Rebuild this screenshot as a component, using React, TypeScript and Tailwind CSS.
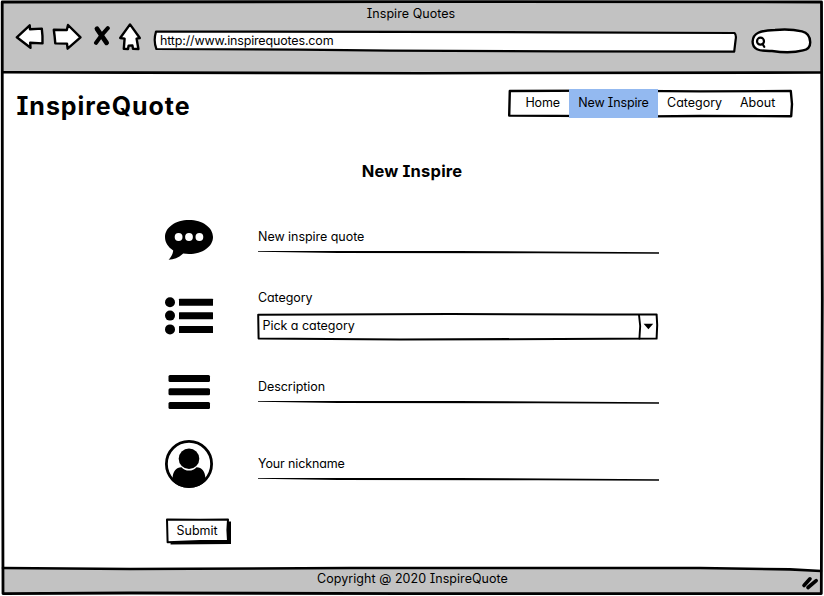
import type { ReactNode } from "react";

function Sketch({ box, className, children }: { box: string; className: string; children: ReactNode }) {
  return (
    <svg viewBox={box} className={className} fill="none" stroke="#000" strokeWidth="2.4" strokeLinejoin="round" strokeLinecap="round">
      {children}
    </svg>
  );
}

function WindowFrame() {
  return (
    <Sketch box="0 0 824 596" className="pointer-events-none absolute inset-0 h-[596px] w-[824px]">
      <path d="M2.2 2 L410 1.6 L821.5 2 L822.3 300 L821.3 593.6 L410 593.6 L130 593 L3 593.6 L2.4 300 Z" strokeWidth="2.8" />
      <path d="M3 72.2 L140 72.6 L420 73.2 L821 72.5" strokeWidth="2.6" />
      <path d="M3 568 L130 569 L350 568 L700 568 L790 569.4 L821 571" strokeWidth="2.6" />
    </Sketch>
  );
}

function Toolbar() {
  return (
    <div className="flex h-[34px] items-center pl-[14px]">
      <Sketch box="14 22 31 34" className="mr-[6px] h-[34px] w-[31px] shrink-0">
        <path d="M16.8 37.3 L29.7 25.3 L30 29.3 L41.8 28.6 Q42.8 36 42.5 43.4 L30.2 42.8 L30.5 47.8 Z" fill="#fff" />
      </Sketch>
      <Sketch box="51 22 32 34" className="mr-[10px] h-[34px] w-[32px] shrink-0">
        <path d="M53.8 29.8 L66.8 30 L68 25 L80.5 37.4 L67.6 48.7 L67 43.6 L55.3 43.4 L54.6 36 Z" fill="#fff" />
      </Sketch>
      <Sketch box="93 22 17 34" className="mr-[7px] h-[34px] w-[17px] shrink-0">
        <path d="M97 28.8 L106.6 42.8" strokeWidth="4.8" />
        <path d="M107.8 28.2 Q100.500 36 96 42.8" strokeWidth="4" />
      </Sketch>
      <Sketch box="117 22 26 34" className="mr-[9px] h-[34px] w-[26px] shrink-0">
        <path d="M130 24.4 L139.8 38 L136.6 38.6 L138.4 49 L133 48.8 L132.4 45.4 L128.6 45.6 L128 49 L123.8 48.8 L124.6 38.6 L120.2 38 Z" fill="#fff" />
      </Sketch>
      <div className="relative flex h-[34px] w-[586px] shrink-0 items-center">
        <Sketch box="152 22 586 34" className="absolute inset-0 h-[34px] w-[586px]">
          <path d="M156 31.6 L400 31.8 L560 32.4 L734.5 33 Q736.6 35 735.6 40 L734.2 51.6 L560 51.4 L390 50.6 L300 49.6 L156.4 49 Q153.2 41 156 31.6 Z" fill="#fff" strokeWidth="2.2" />
        </Sketch>
        <span className="relative ml-[8px] mt-[3px] text-[12.5px] leading-4 tracking-[-0.16px]">http://www.inspirequotes.com</span>
      </div>
      <Sketch box="750 22 63 34" className="ml-3 h-[34px] w-[63px] shrink-0">
        <path d="M752.6 41.5 C753 33 760 30.4 775 30 C786 29 796 30 802 31.4 C808 32.8 810 37 810.2 42 C810.4 47 808 49.5 803 50.4 C793 53 783 52.6 772 51 C758 51.4 752.6 49 752.6 41.5 Z" fill="#fff" />
        <circle cx="760.5" cy="41.2" r="3.5" strokeWidth="2.2" />
        <path d="M762.6 44 L764.2 46.8" strokeWidth="2.2" />
      </Sketch>
    </div>
  );
}

function Nav() {
  return (
    <nav className="relative mr-[30px] flex h-[30px] w-[286px] items-center text-[12.5px] leading-4">
      <Sketch box="508 88 286 30" className="absolute inset-0 h-[30px] w-[286px]">
        <path d="M509.8 91 L600 90.6 L700 91.4 L790.8 91 L792 104 L791.2 116.2 L700 116 L650 116.4 L509.2 115.6 Z" strokeWidth="2.4" />
      </Sketch>
      <a className="relative w-[61px] pl-[17.5px] tracking-[-0.2px]">Home</a>
      <a className="relative flex h-[29px] w-[89px] items-center justify-center bg-[#93b9f0] pb-px tracking-[-0.15px]">New Inspire</a>
      <a className="relative w-[73px] pl-[9px]">Category</a>
      <a className="relative pl-[9px]">About</a>
    </nav>
  );
}

function LineField({ label, className }: { label: string; className: string }) {
  return (
    <div className="flex w-[401px] flex-col">
      <span className={className}>{label}</span>
      <svg viewBox="0 0 401 4" className="mt-[5px] h-[4px] w-[401px]">
        <path d="M0 0.9 L60 1 L200 1 L401 2.2 L401 3.8 L280 3.3 L80 2.9 L0 1.7 Z" fill="#000" />
      </svg>
    </div>
  );
}

export default function App() {
  return (
    <div className="relative flex h-[596px] w-[824px] flex-col overflow-hidden bg-white font-[Inter,'Liberation_Sans',sans-serif] text-black [font-feature-settings:'cv11','cv08','ss01']">
      <header className="mx-[2px] mt-[2px] h-[70px] shrink-0 bg-[#c2c2c2]">
        <div className="-ml-[2px] flex h-5 items-center justify-center pt-[3px] text-[12.5px] leading-4 tracking-[0.05px]">Inspire Quotes</div>
        <div className="-ml-[2px]">
          <Toolbar />
        </div>
      </header>

      <main className="flex flex-1 flex-col">
        <div className="flex h-[62px] items-center justify-between pl-[16.5px]">
          <h1 className="mt-[5px] text-[25px] font-bold leading-8 tracking-[0.95px]">InspireQuote</h1>
          <Nav />
        </div>

        <h2 className="mt-[27px] text-center text-[16.5px] font-bold leading-5 tracking-[0.2px]">New Inspire</h2>

        <form className="mt-[37px] flex flex-col pl-[164px]">
          <div className="flex h-[44px] gap-[44px]">
            <svg viewBox="164 218 50 44" className="h-[44px] w-[50px] shrink-0">
              <path d="M189 220 C202.500 220 213 227.500 213 237 C213 246.500 202.500 254 189 254 C187 254 185 253.800 183.200 253.500 C179 257.500 174 259.600 168.600 259.800 C171 257 172.800 254.500 173.200 250.400 C168 247 165 242.400 165 237 C165 227.500 175.500 220 189 220 Z" />
              <g fill="#fff">
                <circle cx="178.600" cy="237" r="3.900" />
                <circle cx="189" cy="237" r="3.900" />
                <circle cx="199.400" cy="237" r="3.900" />
              </g>
            </svg>
            <div className="pt-[11px]">
              <LineField label="New inspire quote" className="h-[16px] text-[12.5px] leading-4 tracking-[-0.04px]" />
            </div>
          </div>

          <div className="mt-[27px] flex h-[52px] gap-[43px]">
            <svg viewBox="164 289 50 52" className="h-[52px] w-[50px] shrink-0">
              <circle cx="170" cy="302.200" r="5" />
              <circle cx="170" cy="315.600" r="5" />
              <circle cx="170" cy="329.400" r="5" />
              <rect x="179" y="298.800" width="34" height="7" rx="0.500" />
              <rect x="179" y="312.200" width="34" height="7" rx="0.500" />
              <rect x="179" y="326" width="34" height="7" rx="0.500" />
            </svg>
            <div className="flex flex-col">
              <label className="h-[24px] pl-[1px] pt-px text-[12.5px] leading-4 tracking-[-0.08px]">Category</label>
              <div className="relative flex h-[28px] w-[402px] items-center pb-[3px]">
                <Sketch box="257 313 402 28" className="absolute inset-0 h-[28px] w-[402px]">
                  <path d="M258.200 314.800 L450 314 L600 314.600 L656.600 314.400 L657.200 325 L656.600 338.600 L560 339 L400 339.400 L258.600 338.600 Z" strokeWidth="2" />
                  <path d="M639 315 L640.200 326 L639.400 338.600" strokeWidth="1.900" />
                  <path d="M643.600 323.800 H653.200 L648.400 329.200 Z" fill="#000" stroke="none" />
                </Sketch>
                <span className="relative pl-[5.5px] text-[12.5px] leading-4 tracking-[-0.04px]">Pick a category</span>
              </div>
            </div>
          </div>

          <div className="mt-[29px] flex h-[44px] gap-[44px]">
            <svg viewBox="164 370 50 44" className="h-[44px] w-[50px] shrink-0">
              <rect x="168.500" y="375" width="41.500" height="7" rx="1.500" />
              <rect x="168.500" y="388.200" width="41.500" height="7" rx="1.500" />
              <rect x="168.500" y="402" width="41.500" height="7" rx="1.500" />
            </svg>
            <div className="pt-[9px]">
              <LineField label="Description" className="h-[16px] text-[12.5px] leading-4 tracking-[-0.05px]" />
            </div>
          </div>

          <div className="mt-[25px] flex h-[50px] gap-[44px]">
            <svg viewBox="164 439 50 50" className="h-[50px] w-[50px] shrink-0">
              <circle cx="189" cy="464" r="22.600" fill="#fff" stroke="#000" strokeWidth="2.800" />
              <circle cx="189" cy="458.800" r="10.300" />
              <path d="M172.600 478 C173 471 176 467.600 181.500 467.200 C183.500 469.600 186 470.600 189 470.600 C192 470.600 194.500 469.600 196.500 467.200 C202 467.600 205 471 205.400 478 L208 478.500 A24 24 0 0 1 170 478.500 Z" />
            </svg>
            <div className="pt-[17px]">
              <LineField label="Your nickname" className="h-[16px] text-[12.5px] leading-4 tracking-[-0.12px]" />
            </div>
          </div>

          <button type="button" className="relative mt-[28px] flex h-[29px] w-[68px] items-center pb-[1px] text-[12.5px] leading-4">
            <Sketch box="164 517 68 29" className="absolute inset-0 h-[29px] w-[68px]">
              <path d="M170 521 L231 521.400 L231 544 L170.600 544.400 Z" fill="#000" stroke="none" />
              <path d="M167 519.400 L200 519.800 L228 519.600 L227.400 530 L228 541 L200 541 L167.600 542.200 Z" fill="#fff" strokeWidth="2" />
            </Sketch>
            <span className="relative pl-[12.5px]">Submit</span>
          </button>
        </form>
      </main>

      <footer className="relative mx-[2px] mb-[2px] flex h-[26px] shrink-0 justify-center bg-[#c2c2c2]">
        <svg viewBox="2 568 820 26" className="absolute inset-0 h-[26px] w-[820px]">
          <path d="M700 568 L790 569.400 L822 571 V568 Z" fill="#fff" />
          <path d="M804 585.500 L810 578.800 M808 587.500 L816.200 580.600" stroke="#000" strokeWidth="3.600" strokeLinecap="round" />
        </svg>
        <span className="relative mt-[3px] pl-px text-[12.5px] leading-4 tracking-[0.05px]">Copyright @ 2020 InspireQuote</span>
      </footer>
      <WindowFrame />
    </div>
  );
}
